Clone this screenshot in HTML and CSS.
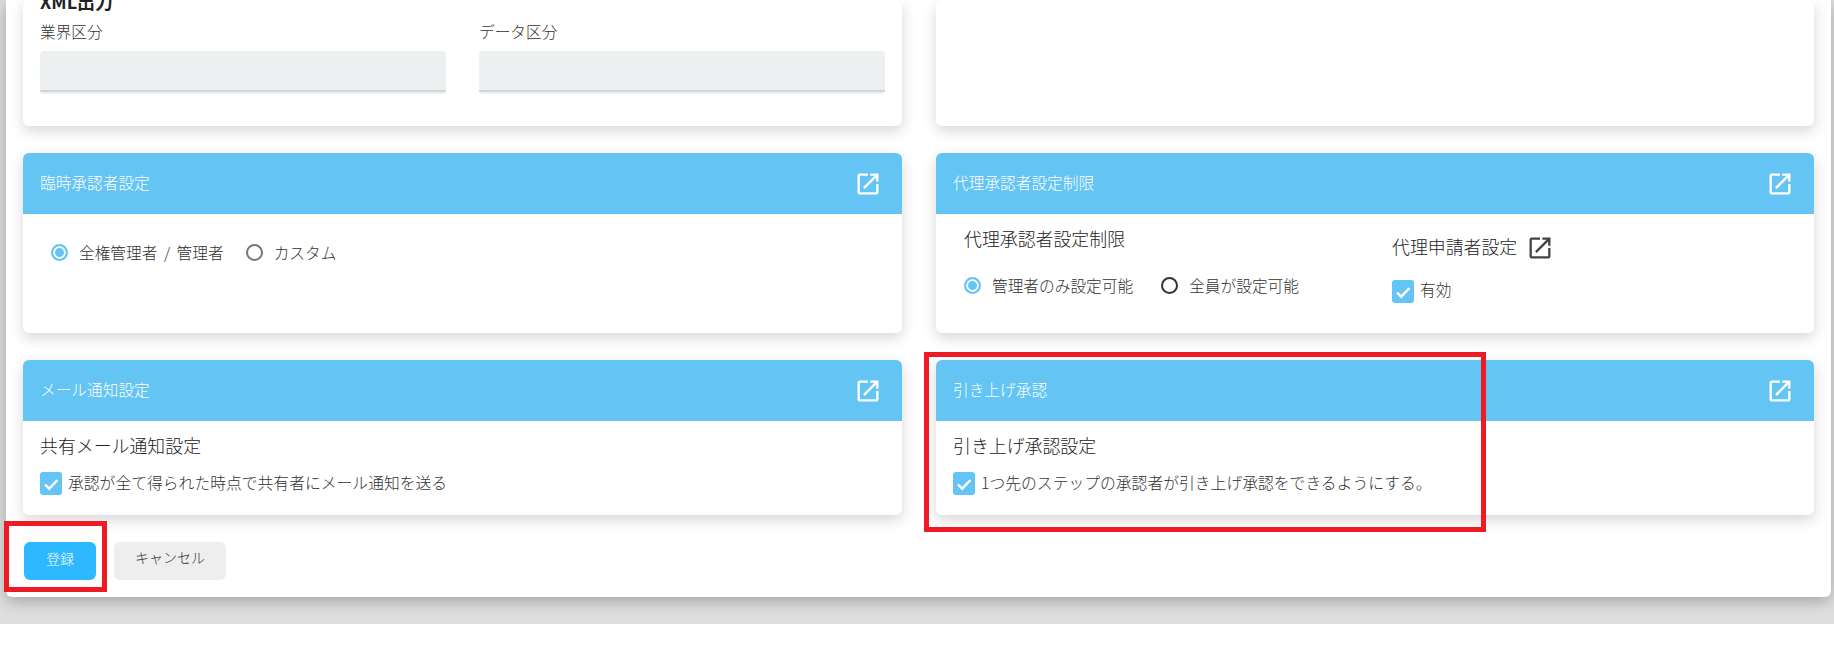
FILE: index.html
```html
<!DOCTYPE html>
<html lang="ja">
<head>
<meta charset="utf-8">
<title>設定</title>
<link rel="stylesheet" href="styles.css">
</head>
<body>
<svg class="defs" width="0" height="0" aria-hidden="true">
  <symbol id="open" viewBox="0 0 24 24"><path d="M19 19H5V5h7V3H5a2 2 0 0 0-2 2v14a2 2 0 0 0 2 2h14a2 2 0 0 0 2-2v-7h-2v7zM14 3v2h3.59l-9.83 9.83 1.41 1.41L19 6.41V10h2V3h-7z"/></symbol>
  <symbol id="tick" viewBox="0 0 22 22"><path d="M5 11.5l4.2 4.2L17.5 7" fill="none" stroke="#fff" stroke-width="2.4"/></symbol>
</svg>
<div class="screen">
  <main class="panel">
    <div class="grid">
      <section class="card card-xml">
        <div class="xml-body">
          <h3 class="xml-title">XML出力</h3>
          <div class="fields">
            <div class="field"><label class="field-label">業界区分</label><div class="input"></div></div>
            <div class="field"><label class="field-label">データ区分</label><div class="input"></div></div>
          </div>
        </div>
      </section>
      <section class="card card-xml"></section>

      <section class="card card-mid">
        <header class="card-head"><span>臨時承認者設定</span><svg class="head-icon"><use href="#open"/></svg></header>
        <div class="body-temp">
          <div class="radios">
            <span class="radio on"></span><span class="opt opt-spaced">全権管理者 / 管理者</span>
            <span class="radio off"></span><span class="opt">カスタム</span>
          </div>
        </div>
      </section>
      <section class="card card-mid">
        <header class="card-head"><span>代理承認者設定制限</span><svg class="head-icon"><use href="#open"/></svg></header>
        <div class="body-proxy">
          <div class="proxy-left">
            <h4 class="sub">代理承認者設定制限</h4>
            <div class="radios">
              <span class="radio on"></span><span class="opt">管理者のみ設定可能</span>
              <span class="radio dark"></span><span class="opt">全員が設定可能</span>
            </div>
          </div>
          <div class="proxy-right">
            <div class="sub-row"><h4 class="sub">代理申請者設定</h4><svg class="sub-icon"><use href="#open"/></svg></div>
            <div class="check-row"><span class="check"><svg class="tick"><use href="#tick"/></svg></span><span class="opt">有効</span></div>
          </div>
        </div>
      </section>

      <section class="card card-low">
        <header class="card-head"><span>メール通知設定</span><svg class="head-icon"><use href="#open"/></svg></header>
        <div class="body-low">
          <h4 class="sub">共有メール通知設定</h4>
          <div class="check-row"><span class="check"><svg class="tick"><use href="#tick"/></svg></span><span class="opt">承認が全て得られた時点で共有者にメール通知を送る</span></div>
        </div>
      </section>
      <section class="card card-low">
        <header class="card-head"><span>引き上げ承認</span><svg class="head-icon"><use href="#open"/></svg></header>
        <div class="body-low">
          <h4 class="sub">引き上げ承認設定</h4>
          <div class="check-row"><span class="check"><svg class="tick"><use href="#tick"/></svg></span><span class="opt">1つ先のステップの承認者が引き上げ承認をできるようにする。</span></div>
        </div>
      </section>
    </div>
    <div class="actions">
      <button class="btn primary">登録</button>
      <button class="btn cancel">キャンセル</button>
    </div>
  </main>
  <div class="mark mark-save"></div>
  <div class="mark mark-card"></div>
</div>
</body>
</html>
```
FILE: styles.css
```css
* { box-sizing: border-box; }
html, body { margin: 0; padding: 0; }
body {
  width: 1834px;
  height: 648px;
  overflow: hidden;
  background: #fff;
  color: #333;
  font-family: "Noto Sans CJK JP", Roboto, sans-serif;
  font-weight: 300;
}
.defs { position: absolute; }
.screen {
  position: relative;
  height: 624px;
  padding: 0 3px 27px 6px;
  background: #dfdfdf;
  overflow: hidden;
}
.panel {
  height: 597px;
  padding: 0 17px;
  background: #fff;
  border-radius: 0 0 6px 6px;
  box-shadow: 0 4px 16px rgba(0, 0, 0, .28);
}
.grid {
  display: grid;
  grid-template-columns: 879px 878px;
  grid-template-rows: 126px 180px 155px;
  column-gap: 34px;
  row-gap: 27px;
}
.card {
  background: #fff;
  border-radius: 6px;
  box-shadow: 0 5px 14px rgba(0, 0, 0, .16);
  overflow: hidden;
}
.card-head {
  display: flex;
  align-items: center;
  justify-content: space-between;
  height: 61px;
  padding: 0 20px 0 17px;
  background: #64c4f3;
  color: #fff;
  font-size: 15.7px;
}
.card-head span { margin-top: -2px; }
.head-icon { width: 28px; height: 28px; fill: #fff; }
.xml-body { padding: 0 17px; }
.xml-title { margin: -10px 0 0; height: 22px; font-size: 18px; line-height: 22px; font-weight: 700; color: #222; }
.fields { display: flex; gap: 33px; margin-top: 9px; }
.field { width: 406px; }
.field-label { display: block; height: 30px; font-size: 15.7px; line-height: 22px; color: #333; }
.input {
  height: 43px;
  border-radius: 4px;
  background-color: #ecf0f1;
  background-image: linear-gradient(#d2d5d6, #d2d5d6);
  background-size: 100% 2px;
  background-position: 0 39px;
  background-repeat: no-repeat;
}
.radios { display: flex; align-items: center; }
.radio {
  flex: none;
  width: 17px;
  height: 17px;
  border-radius: 50%;
  border: 2px solid #777;
  background: #fff;
}
.radio.on { border-color: #64c4f3; background: #64c4f3; box-shadow: inset 0 0 0 2px #fff; }
.radio.dark { border-color: #333; }
.opt { font-size: 15.7px; line-height: 22px; color: #333; white-space: nowrap; }
.opt-spaced { word-spacing: 3px; }
.radio + .opt { margin-left: 11px; margin-right: 22px; padding-top: 1px; }
.body-temp { padding: 27px 0 0 28px; }
.body-proxy { display: flex; }
.proxy-left { width: 456px; padding: 11px 0 0 28px; }
.proxy-left .radios { margin-top: 23px; }
.proxy-left .radio + .opt { margin-right: 28px; }
.proxy-right { padding-top: 20px; }
.sub { margin: 0; font-size: 17.9px; line-height: 26px; font-weight: 300; color: #222; white-space: nowrap; }
.sub-row { display: flex; align-items: center; gap: 9px; }
.sub-row .sub { margin-top: -4px; }
.sub-icon { width: 28px; height: 28px; fill: #444; }
.check-row { display: flex; align-items: center; gap: 6px; }
.check-row .opt { margin-top: -2px; }
.proxy-right .check-row { margin-top: 18px; }
.proxy-right .check-row .opt { margin-top: -4px; }
.check {
  flex: none;
  width: 22px;
  height: 23px;
  border-radius: 3px;
  background: #64c4f3;
  display: flex;
  align-items: center;
  justify-content: center;
}
.tick { width: 22px; height: 22px; }
.body-low { padding: 11px 17px 0; }
.body-low .check-row { margin-top: 14px; }
.body-low .opt { font-size: 15.8px; }
.actions { display: flex; gap: 18px; margin-top: 27px; padding-left: 1px; }
.btn {
  height: 38px;
  border: 0;
  border-radius: 6px;
  font-family: inherit;
  font-weight: 300;
  font-size: 14px;
  padding: 0;
}
.primary { width: 72px; background: #2db9ff; color: #fff; padding-bottom: 6px; }
.cancel { width: 112px; background: #eee; color: #333; padding-bottom: 9px; }
.mark {
  position: absolute;
  border: 5px solid #ed1c24;
  pointer-events: none;
}
.mark-save { left: 4px; top: 521px; width: 103px; height: 71px; }
.mark-card { left: 924px; top: 352px; width: 562px; height: 180px; }
```
